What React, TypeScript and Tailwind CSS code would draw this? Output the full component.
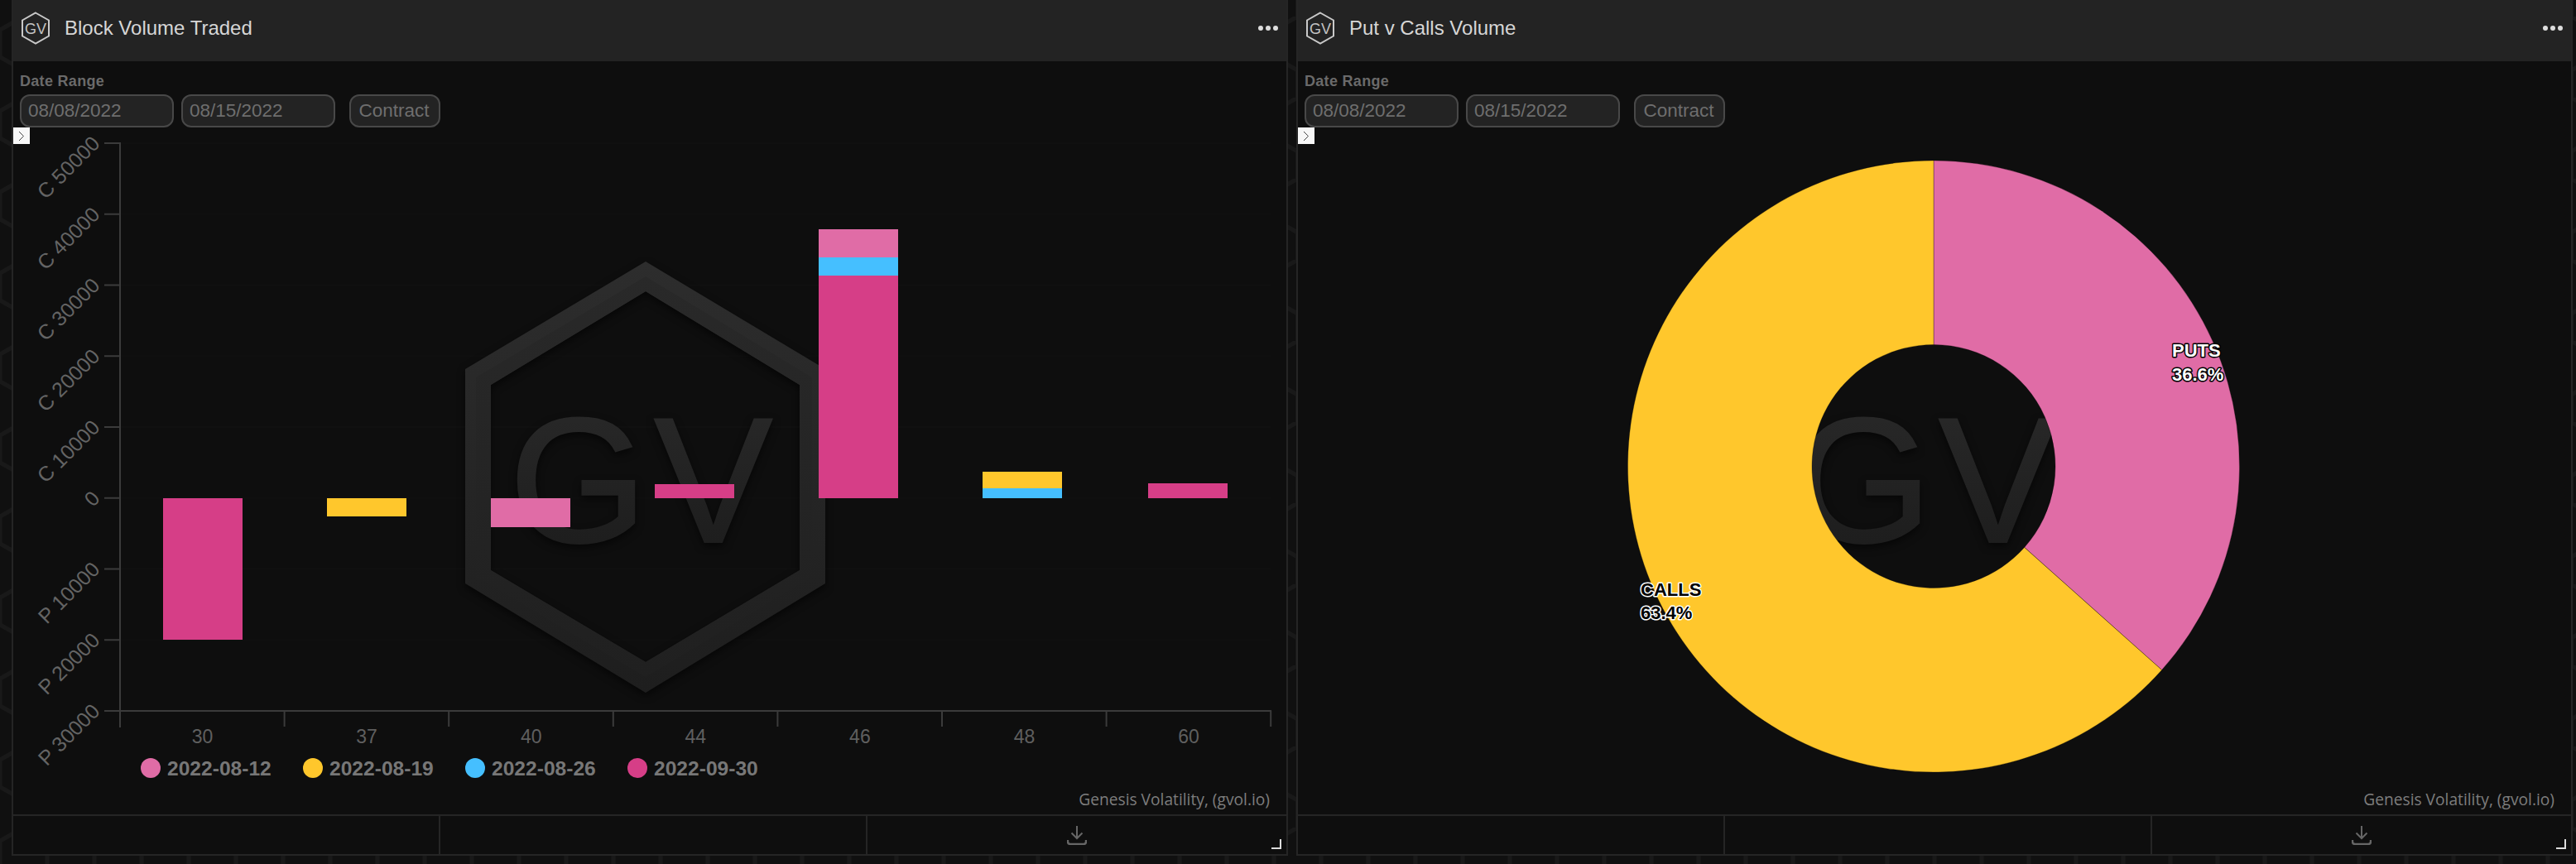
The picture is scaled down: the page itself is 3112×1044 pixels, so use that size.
const AXIS = '#3b3b3b';
const PINK = '#e06ca6';
const YELLOW = '#ffc72c';
const BLUE = '#45bfff';
const MAGENTA = '#d63e87';

const yTicks = ['C 50000', 'C 40000', 'C 30000', 'C 20000', 'C 10000', '0', 'P 10000', 'P 20000', 'P 30000'];

const bars = [
  { label: '30', x: 197, parts: [{ color: MAGENTA, from: 602, to: 773 }] },
  { label: '37', x: 395, parts: [{ color: YELLOW, from: 602, to: 624 }] },
  { label: '40', x: 593, parts: [{ color: PINK, from: 602, to: 637 }] },
  { label: '44', x: 791, parts: [{ color: MAGENTA, from: 585, to: 602 }] },
  {
    label: '46',
    x: 989,
    parts: [
      { color: PINK, from: 277, to: 311 },
      { color: BLUE, from: 311, to: 333 },
      { color: MAGENTA, from: 333, to: 602 },
    ],
  },
  {
    label: '48',
    x: 1187,
    parts: [
      { color: YELLOW, from: 570, to: 590 },
      { color: BLUE, from: 590, to: 602 },
    ],
  },
  { label: '60', x: 1387, parts: [{ color: MAGENTA, from: 584, to: 602 }] },
];

const legend = [
  { label: '2022-08-12', color: PINK },
  { label: '2022-08-19', color: YELLOW },
  { label: '2022-08-26', color: BLUE },
  { label: '2022-09-30', color: MAGENTA },
];

function Logo() {
  return (
    <svg width="36" height="40" viewBox="0 0 36 40" className="shrink-0">
      <path d="M18 1.500 34 10.500V29.500L18 38.500 2 29.500V10.500Z" fill="none" stroke="#c9c9c9" strokeWidth="2" />
      <text x="18" y="26.500" textAnchor="middle" fontSize="18" fill="#c4c4c4">
        GV
      </text>
    </svg>
  );
}

function Watermark({ dx }: { dx: number }) {
  const shift = `translate(${dx} 0)`;
  return (
    <g transform={shift} className="drop-shadow-[0_4px_5px_rgba(0,0,0,0.55)]">
      <path
        fillRule="evenodd"
        fill="url(#wmOuter)"
        d="M780 316 997 446V705L780 837 562 705V446ZM780 352 593 465V689L780 800 966 689V465Z"
      />
      <path
        fillRule="evenodd"
        fill="url(#wmInner)"
        d="M780 334 981 456V697L780 818 575 697V456ZM780 352 593 465V689L780 800 966 689V465Z"
      />
      <text x="615" y="655" fontSize="215" fill="url(#wmText)" stroke="url(#wmText)" strokeWidth="2">
        G
      </text>
      <text x="790" y="655" fontSize="215" fill="url(#wmText)" stroke="url(#wmText)" strokeWidth="2">
        V
      </text>
    </g>
  );
}

function Defs() {
  return (
    <defs>
      <linearGradient id="wmOuter" x1="0" y1="0" x2="0" y2="1">
        <stop offset="0" stopColor="#2d2d2d" />
        <stop offset="1" stopColor="#1e1e1e" />
      </linearGradient>
      <linearGradient id="wmInner" x1="0" y1="0" x2="0" y2="1">
        <stop offset="0" stopColor="#292929" />
        <stop offset="1" stopColor="#202020" />
      </linearGradient>
      <linearGradient id="wmText" x1="0" y1="0" x2="0" y2="1">
        <stop offset="0" stopColor="#2a2a2a" />
        <stop offset="1" stopColor="#1b1b1b" />
      </linearGradient>
    </defs>
  );
}

function BarChart() {
  return (
    <svg viewBox="16 154 1538 830" className="block w-full h-full">
      <Defs />
      {yTicks.map((t, i) => (
        <line key={t} x1="145" x2="1535" y1={173 + i * 85.75} y2={173 + i * 85.75} stroke="#101010" strokeWidth="2" />
      ))}
      <Watermark dx={0} />
      {yTicks.map((t, i) => {
        const y = 173 + i * 85.75;
        return (
          <g key={t}>
            <line x1="126" x2="145" y1={y} y2={y} stroke={AXIS} strokeWidth="2" />
            <text
              x="0"
              y="0"
              transform={`translate(122 ${y + 2}) rotate(-45)`}
              textAnchor="end"
              fontSize="25"
              fill="#646464"
            >
              {t}
            </text>
          </g>
        );
      })}
      <line x1="145" x2="145" y1="172" y2="879" stroke={AXIS} strokeWidth="2" />
      <line x1="126" x2="1536" y1="859" y2="859" stroke={AXIS} strokeWidth="2" />
      {bars.map((b, i) => {
        const left = 145 + i * 198.6;
        return (
          <g key={b.label}>
            <line x1={left + 198.6} x2={left + 198.6} y1="859" y2="878" stroke={AXIS} strokeWidth="2" />
            {b.parts.map((p) => (
              <rect key={p.color + p.from} x={b.x} y={p.from} width="96" height={p.to - p.from} fill={p.color} />
            ))}
            <text x={left + 99.5} y="898" textAnchor="middle" fontSize="23" fill="#5f5f5f">
              {b.label}
            </text>
          </g>
        );
      })}
      {legend.map((l, i) => (
        <g key={l.label}>
          <circle cx={182 + i * 196} cy="928" r="12" fill={l.color} />
          <text x={202 + i * 196} y="937" fontSize="24.6" fontWeight="700" fill="#777777">
            {l.label}
          </text>
        </g>
      ))}
    </svg>
  );
}

function arc(cx: number, cy: number, r: number, a: number) {
  const rad = (a * Math.PI) / 180;
  return `${cx + r * Math.sin(rad)} ${cy - r * Math.cos(rad)}`;
}

function slice(start: number, end: number) {
  const cx = 2336;
  const cy = 563.5;
  const R = 369.5;
  const r = 147;
  const large = end - start > 180 ? 1 : 0;
  return `M${arc(cx, cy, R, start)}A${R} ${R} 0 ${large} 1 ${arc(cx, cy, R, end)}L${arc(cx, cy, r, end)}A${r} ${r} 0 ${large} 0 ${arc(cx, cy, r, start)}Z`;
}

function PieLabel({ x, y, text, dark }: { x: number; y: number; text: string; dark?: boolean }) {
  return (
    <text
      x={x}
      y={y}
      fontSize="22"
      fontWeight="700"
      fill={dark ? '#000000' : '#ffffff'}
      stroke={dark ? '#ffffff' : '#000000'}
      strokeWidth="3"
      strokeLinejoin="round"
      className="[paint-order:stroke]"
    >
      {text}
    </text>
  );
}

function PieChart() {
  return (
    <svg viewBox="1568 154 1538 830" className="block w-full h-full">
      <Defs />
      <Watermark dx={1552} />
      <path d={slice(0, 131.76)} fill={PINK} stroke="#000" strokeOpacity="0.3" strokeWidth="1" />
      <path d={slice(131.76, 360)} fill={YELLOW} stroke="#000" strokeOpacity="0.3" strokeWidth="1" />
      <PieLabel x={2624} y={431} text="PUTS" />
      <PieLabel x={2624} y={460} text="36.6%" />
      <PieLabel x={1982} y={720} text="CALLS" dark />
      <PieLabel x={1982} y={748} text="63.4%" dark />
    </svg>
  );
}

function Panel({ title, children }: { title: string; children: React.ReactNode }) {
  const field =
    'h-10 rounded-xl border-2 border-[#484848] bg-[#232323] text-[22.5px] text-[#6e6e6e] outline-none';
  return (
    <div className="relative flex flex-col w-[1542px] h-[1034px] border-x-2 border-b-2 border-[#252525] bg-[#0e0e0e]">
      <div className="flex items-center h-[74px] shrink-0 pl-[9px] pr-[10px] pb-[6px] bg-[#232323]">
        <Logo />
        <span className="ml-[17px] text-2xl text-[#d6d6d6]">{title}</span>
        <span className="ml-auto flex gap-[3px]">
          <i className="w-1.5 h-1.5 rounded-full bg-[#dddddd]" />
          <i className="w-1.5 h-1.5 rounded-full bg-[#dddddd]" />
          <i className="w-1.5 h-1.5 rounded-full bg-[#dddddd]" />
        </span>
      </div>
      <div className="h-20 shrink-0 pl-2 pt-3">
        <div className="h-7 text-[18px] leading-6 font-bold tracking-[0.3px] text-[#6a6a6a]">Date Range</div>
        <div className="flex">
          <input readOnly value="08/08/2022" className={`${field} w-[186px] pl-2`} />
          <input readOnly value="08/15/2022" className={`${field} w-[186px] pl-2 ml-[9px]`} />
          <button className={`${field} w-[110px] ml-[17px] pr-[2px]`}>Contract</button>
        </div>
      </div>
      <div className="relative flex-1 min-h-0">
        {children}
        <button className="absolute left-0 top-0 flex items-center justify-center w-5 h-5 bg-[#f7f7f7]">
          <svg width="8" height="13" viewBox="0 0 8 13">
            <path d="M1 1 6.500 6.500 1 12" fill="none" stroke="#444" strokeWidth="1" />
          </svg>
        </button>
        <span className="absolute right-5 bottom-[6px] font-['Open_Sans',sans-serif] text-[19.2px] leading-6 text-[#7d7d7d]">
          Genesis Volatility, (gvol.io)
        </span>
      </div>
      <div className="grid grid-cols-[516px_516px_1fr] h-[48px] shrink-0 border-t-2 border-[#252525]">
        <div className="border-r-2 border-[#252525]" />
        <div className="border-r-2 border-[#252525]" />
        <div className="flex items-center justify-center">
          <svg width="24" height="24" viewBox="0 0 24 24" fill="none" stroke="#666" strokeWidth="2">
            <path d="M12 1V16M5.500 9.500 12 16 18.500 9.500" />
            <path d="M1 18V20Q1 23 4 23H20Q23 23 23 20V18" strokeWidth="2.400" />
          </svg>
        </div>
      </div>
      <svg width="12" height="12" viewBox="0 0 12 12" className="absolute right-[6px] bottom-[6px]">
        <path d="M0 11H11V0" fill="none" stroke="#dcdcdc" strokeWidth="2" />
      </svg>
    </div>
  );
}

export default function App() {
  return (
    <div className="relative w-[3112px] h-[1044px] overflow-hidden bg-[#101010] font-['Liberation_Sans',Arial,sans-serif]">
      <svg className="absolute inset-0 w-full h-full">
        <defs>
          <pattern id="hexes" width="57" height="98" patternUnits="userSpaceOnUse" patternTransform="translate(0 1000)">
            <path
              d="M0 16 28.500 0 57 16M0 16V49M57 16V49M0 49 28.500 65 57 49M28.500 65V98"
              fill="none"
              stroke="#191919"
              strokeWidth="5"
            />
          </pattern>
        </defs>
        <rect width="3112" height="1044" fill="url(#hexes)" />
      </svg>
      <div className="relative flex gap-[10px] pl-[14px]">
        <Panel title="Block Volume Traded">
          <BarChart />
        </Panel>
        <Panel title="Put v Calls Volume">
          <PieChart />
        </Panel>
      </div>
    </div>
  );
}
